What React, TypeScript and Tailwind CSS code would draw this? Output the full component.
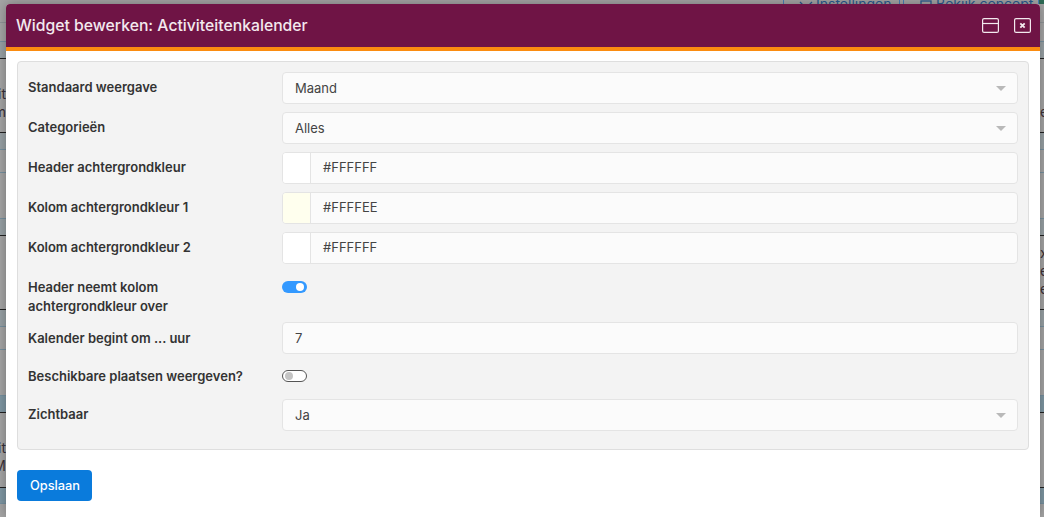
import type { ReactNode } from 'react';

const font = { fontFamily: 'Inter, "Liberation Sans", sans-serif' };

// rows of the page behind the dialog, only their ends stick out left and right
const backRows = [
  { h: 'h-[23px]', line: 'border-[#8f9497]', bg: '', pad: '', lines: [] },
  { h: 'h-[19px]', line: 'border-[#76909f]', bg: '', pad: '', lines: [] },
  { h: 'h-[17px]', line: 'border-[#222222]', bg: 'bg-[#98a1a5]', pad: '', lines: [] },
  { h: 'h-[74px]', line: 'border-[#222222]', bg: '', pad: 'pt-[26px]', lines: [['it', ''], ['m', 'e']] },
  { h: 'h-[17px]', line: 'border-[#76909f]', bg: 'bg-[#98a1a5]', pad: '', lines: [] },
  { h: 'h-[23px]', line: 'border-[#76909f]', bg: '', pad: '', lines: [] },
  { h: 'h-[46px]', line: 'border-[#76909f]', bg: '', pad: '', lines: [] },
  { h: 'h-[17px]', line: 'border-[#222222]', bg: 'bg-[#98a1a5]', pad: '', lines: [] },
  { h: 'h-[74px]', line: 'border-[#222222]', bg: '', pad: 'pt-[8px]', lines: [['', 'x:'], ['', 'e'], ['', 'e']] },
  { h: 'h-[17px]', line: 'border-[#76909f]', bg: 'bg-[#98a1a5]', pad: '', lines: [] },
  { h: 'h-[23px]', line: 'border-[#76909f]', bg: '', pad: '', lines: [] },
  { h: 'h-[46px]', line: 'border-[#76909f]', bg: '', pad: '', lines: [] },
  { h: 'h-[17px]', line: 'border-[#222222]', bg: 'bg-[#7f97a3]', pad: '', lines: [] },
  { h: 'h-[75px]', line: 'border-[#222222]', bg: '', pad: 'pt-[26px]', lines: [['it', ''], ['M', '']] },
  { h: 'h-[16px]', line: 'border-[#76909f]', bg: 'bg-[#7f97a3]', pad: '', lines: [] },
];

function BackPage() {
  return (
    <div className="flex w-full flex-col text-[14px] leading-[18px] text-[#3a3038]">
      <div className="flex h-[4px] items-start overflow-hidden pl-[783px] text-[14px] text-[#2a5a8f]">
        <div className="flex h-[4px] w-[117px] items-end border-x border-[#4a7fb5] pl-[14px]">
          <svg width="16" height="16" viewBox="0 0 16 16" fill="none" stroke="#2a5a8f" strokeWidth="1.3" className="mb-[-12px] shrink-0">
            <path d="M2 2l12 12M14 2L2 14" />
          </svg>
          <span className="mb-[-9px] ml-[2px]">Instellingen</span>
        </div>
        <div className="ml-[3px] flex h-[4px] w-[136px] items-end border-x border-[#4a7fb5] pl-[16px]">
          <svg width="12" height="14" viewBox="0 0 12 14" fill="none" stroke="#2a5a8f" strokeWidth="1.3" className="mb-[-10px] shrink-0">
            <rect x="1" y="1" width="10" height="12" />
          </svg>
          <span className="mb-[-9px] ml-[4px]">Bekijk concept</span>
        </div>
        <div className="h-[10px] flex-1 bg-[#2d6b55]" />
      </div>
      {backRows.map((row, i) => (
        <div key={i} className={`${row.h} ${row.pad} ${row.bg} ${row.line} border-b ${i === 0 ? 'mt-[-4px]' : ''}`}>
          {row.lines.map((l, j) => (
            <div key={j} className="flex justify-between">
              <div className="flex w-[6px] justify-end overflow-hidden">{l[0]}</div>
              <div className="w-[4px] overflow-hidden">{l[1]}</div>
            </div>
          ))}
        </div>
      ))}
    </div>
  );
}

function Label({ children }: { children: ReactNode }) {
  return <div className="w-[254px] shrink-0 pr-4 text-[13px] leading-[19px] font-semibold text-[#333333]">{children}</div>;
}

function SelectBox({ value }: { value: string }) {
  return (
    <div className="flex h-8 flex-1 items-center justify-between rounded border border-[#e4e4e4] bg-[#fbfbfb] pr-[11px] pl-3 text-[13px] text-[#444444]">
      <span className="pt-[2px]">{value}</span>
      <span className="h-0 w-0 border-x-[5px] border-t-[5px] border-x-transparent border-t-[#b9b9b9]" />
    </div>
  );
}

function TextBox({ value }: { value: string }) {
  return (
    <div className="flex h-8 flex-1 items-center rounded border border-[#e4e4e4] bg-[#fbfbfb] px-3 pt-[2px] text-[13px] text-[#444444]">
      {value}
    </div>
  );
}

function ColorBox({ value, swatch }: { value: string; swatch: string }) {
  return (
    <div className="flex h-8 flex-1 items-stretch overflow-hidden rounded border border-[#e4e4e4] bg-[#fbfbfb] text-[13px] text-[#444444]">
      <div className={`w-[28px] border-r border-[#e4e4e4] ${swatch}`} />
      <div className="flex items-center pl-3">{value}</div>
    </div>
  );
}

function Row({ label, children }: { label: ReactNode; children: ReactNode }) {
  return (
    <div className="flex items-start">
      <div className="pt-[6px]">
        <Label>{label}</Label>
      </div>
      {children}
    </div>
  );
}

export default function App() {
  return (
    <div className="relative h-[517px] w-[1044px] overflow-hidden bg-[#a5a5a5]" style={font}>
      <BackPage />

      <div className="absolute top-[4px] left-[6px] flex h-[513px] w-[1034px] flex-col rounded-t bg-white shadow-[0_0_12px_rgba(0,0,0,0.3)]">
        <div className="flex h-[43px] items-center justify-between rounded-t bg-[#6f1445] pr-[9px] pl-[10px]">
          <div className="text-[15.75px] font-medium text-[#f3e9ee]">Widget bewerken: Activiteitenkalender</div>
          <div className="flex items-center gap-[15px]">
            <svg width="17" height="15" viewBox="0 0 17 15" fill="none" stroke="#f3e9ee" strokeWidth="1.2">
              <rect x="0.6" y="0.6" width="15.8" height="13.8" rx="1.5" />
              <path d="M0.6 5.5h15.8" />
            </svg>
            <svg width="17" height="15" viewBox="0 0 17 15" fill="none" stroke="#f3e9ee" strokeWidth="1.2">
              <rect x="0.6" y="0.6" width="15.8" height="13.8" rx="1.5" />
              <path d="M6.3 5.3l4.4 4.4M10.7 5.3l-4.4 4.4" strokeWidth="1.8" />
            </svg>
          </div>
        </div>
        <div className="h-1 bg-[#fb8c10]" />

        <div className="px-[11px] pt-[10px]">
          <div className="flex h-[389px] flex-col gap-2 rounded border border-[#dedede] bg-[#f3f3f3] px-[10px] pt-[10px]">
            <Row label="Standaard weergave"><SelectBox value="Maand" /></Row>
            <Row label="Categorieën"><SelectBox value="Alles" /></Row>
            <Row label="Header achtergrondkleur"><ColorBox value="#FFFFFF" swatch="bg-white" /></Row>
            <Row label="Kolom achtergrondkleur 1"><ColorBox value="#FFFFEE" swatch="bg-[#ffffee]" /></Row>
            <Row label="Kolom achtergrondkleur 2"><ColorBox value="#FFFFFF" swatch="bg-white" /></Row>
            <div className="flex h-[42px] items-start">
              <div className="pt-[6px]">
                <Label>Header neemt kolom<br />achtergrondkleur over</Label>
              </div>
              <div className="mt-[9px] flex h-3 w-[25px] items-center justify-end rounded-full bg-[#3399ff] pr-[3px]">
                <div className="h-2 w-2 rounded-full bg-white" />
              </div>
            </div>
            <div className="flex items-start">
              <div className="pt-[7px]"><Label>Kalender begint om ... uur</Label></div>
              <TextBox value="7" />
            </div>
            <div className="flex h-[29px] items-start">
              <div className="pt-[5px]"><Label>Beschikbare plaatsen weergeven?</Label></div>
              <div className="mt-[8px] flex h-3 w-[25px] items-center rounded-full border border-[#555555] bg-white pl-[2px]">
                <div className="h-2 w-2 rounded-full bg-[#c4c4c4]" />
              </div>
            </div>
            <Row label="Zichtbaar"><SelectBox value="Ja" /></Row>
          </div>
          <button className="mt-5 h-[31px] w-[75px] rounded bg-[#0a7bdc] pl-[1px] text-[12.8px] font-medium text-white">Opslaan</button>
        </div>
      </div>
    </div>
  );
}
